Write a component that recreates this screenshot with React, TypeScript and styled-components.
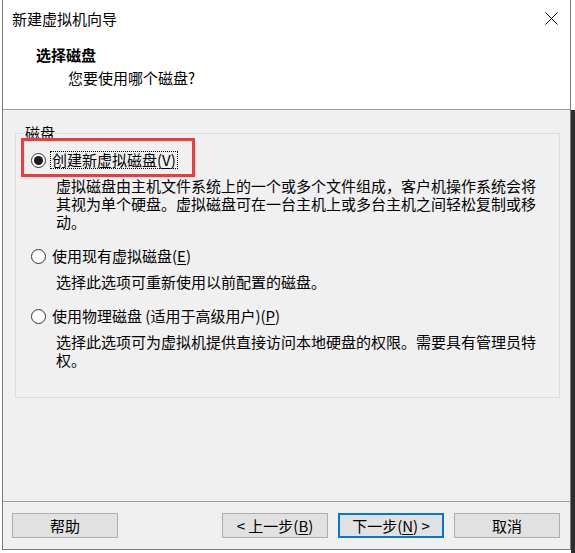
import React from "react";
import styled, { createGlobalStyle } from "styled-components";

const GlobalStyle = createGlobalStyle`
  html, body {
    margin: 0;
    padding: 0;
    background: #ffffff;
  }
  body {
    font-family: "Segoe UI", "Noto Sans CJK SC", "Noto Sans", sans-serif;
    font-size: 15px;
    color: #000000;
  }
  * {
    box-sizing: border-box;
  }
`;

const Desktop = styled.div`
  width: 575px;
  height: 553px;
  display: flex;
  overflow: hidden;
  background: #ffffff;
`;

const LeftEdge = styled.div`
  width: 2px;
  flex-shrink: 0;
  background: #ffffff;
`;

const RightEdge = styled.div`
  width: 4px;
  flex-shrink: 0;
  display: flex;
  flex-direction: column;
`;

const RightEdgeTop = styled.div`
  height: 110px;
  background: #ffffff;
`;

const RightEdgeBottom = styled.div`
  flex: 1;
  background: #2d2d2d;
`;

const Window = styled.div`
  width: 569px;
  height: 550px;
  flex-shrink: 0;
  display: flex;
  flex-direction: column;
  background: #f0f0f0;
  border-left: 1px solid #7a7a7a;
  border-right: 1px solid #7a7a7a;
  border-bottom: 1px solid #7a7a7a;
`;

const TitleBar = styled.div`
  height: 36px;
  display: flex;
  align-items: center;
  justify-content: space-between;
  padding-left: 9px;
  background: #ffffff;
`;

const TitleText = styled.span`
  line-height: 20px;
  padding-top: 1px;
`;

const CloseButton = styled.div`
  width: 38px;
  height: 36px;
  display: flex;
  align-items: center;
  justify-content: center;
`;

const Header = styled.div`
  height: 74px;
  display: flex;
  flex-direction: column;
  gap: 3px;
  padding: 9px 0 0 33px;
  background: #ffffff;
  border-bottom: 1px solid #a0a0a0;
`;

const HeaderTitle = styled.div`
  font-weight: bold;
  line-height: 20px;
`;

const HeaderSubtitle = styled.div`
  line-height: 20px;
  padding-left: 32px;
`;

const Body = styled.div`
  flex: 1;
  padding: 14px 10px 0 12px;
`;

const GroupBox = styled.fieldset`
  margin: 0;
  min-width: 0;
  padding: 9px 0 28px 15px;
  border: 1px solid #dcdcdc;
  display: flex;
  flex-direction: column;
`;

const GroupLegend = styled.legend`
  margin-left: -8px;
  padding: 0 2px;
  line-height: 18px;
`;

const Option = styled.div<{ $gap?: number }>`
  display: flex;
  flex-direction: column;
  margin-top: ${({ $gap }) => $gap ?? 0}px;
`;

const OptionRow = styled.div`
  position: relative;
  height: 18px;
  display: flex;
  align-items: center;
  gap: 4px;
`;

const Radio = styled.span<{ $checked?: boolean }>`
  width: 15px;
  height: 15px;
  border-radius: 50%;
  border: 1px solid #333333;
  background: #ffffff;
  display: flex;
  align-items: center;
  justify-content: center;

  &::after {
    content: "";
    width: 9px;
    height: 9px;
    border-radius: 50%;
    background: ${({ $checked }) => ($checked ? "#1b1b1b" : "transparent")};
  }
`;

const OptionLabel = styled.span<{ $focused?: boolean }>`
  line-height: 16px;
  padding: 0 1px;
  border: 1px dotted
    ${({ $focused }) => ($focused ? "#000000" : "transparent")};

  u {
    text-decoration-thickness: 1px;
    text-underline-offset: 2px;
  }
`;

const Highlight = styled.div`
  position: absolute;
  left: -10px;
  top: -13px;
  width: 174px;
  height: 39px;
  border: 3px solid #ef3b3b;
  pointer-events: none;
`;

const Description = styled.p`
  margin: 8px 0 0 25px;
  width: 488px;
  line-height: 18px;
`;

const Footer = styled.div`
  height: 48px;
  display: flex;
  justify-content: space-between;
  padding: 11px 10px 0 9px;
  border-top: 1px solid #a0a0a0;
`;

const ButtonGroup = styled.div`
  display: flex;
  gap: 10px;
`;

const Button = styled.button<{ $primary?: boolean }>`
  width: 106px;
  height: 25px;
  padding: 0;
  font: inherit;
  line-height: 20px;
  color: #000000;
  background: #e1e1e1;
  border: ${({ $primary }) =>
    $primary ? "2px solid #0078d7" : "1px solid #adadad"};

  u {
    text-decoration-thickness: 1px;
    text-underline-offset: 2px;
  }
`;

const options = [
  {
    label: "创建新虚拟磁盘",
    key: "V",
    description:
      "虚拟磁盘由主机文件系统上的一个或多个文件组成，客户机操作系统会将其视为单个硬盘。虚拟磁盘可在一台主机上或多台主机之间轻松复制或移动。",
    checked: true,
  },
  {
    label: "使用现有虚拟磁盘",
    key: "E",
    description: "选择此选项可重新使用以前配置的磁盘。",
    checked: false,
  },
  {
    label: "使用物理磁盘 (适用于高级用户)",
    key: "P",
    description:
      "选择此选项可为虚拟机提供直接访问本地硬盘的权限。需要具有管理员特权。",
    checked: false,
  },
];

function CloseIcon() {
  return (
    <svg width="13" height="13" viewBox="0 0 13 13">
      <path d="M0.5 0.5 L12.5 12.5 M12.5 0.5 L0.5 12.5" stroke="#000" strokeWidth="1" />
    </svg>
  );
}

export default function App() {
  return (
    <>
      <GlobalStyle />
      <Desktop>
        <LeftEdge />
        <Window>
          <TitleBar>
            <TitleText>新建虚拟机向导</TitleText>
            <CloseButton>
              <CloseIcon />
            </CloseButton>
          </TitleBar>
          <Header>
            <HeaderTitle>选择磁盘</HeaderTitle>
            <HeaderSubtitle>您要使用哪个磁盘?</HeaderSubtitle>
          </Header>
          <Body>
            <GroupBox>
              <GroupLegend>磁盘</GroupLegend>
              {options.map((opt, i) => (
                <Option key={opt.key} $gap={i === 0 ? 0 : 16}>
                  <OptionRow>
                    <Radio $checked={opt.checked} />
                    <OptionLabel $focused={opt.checked}>
                      {opt.label}(<u>{opt.key}</u>)
                    </OptionLabel>
                    {opt.checked && <Highlight />}
                  </OptionRow>
                  <Description>{opt.description}</Description>
                </Option>
              ))}
            </GroupBox>
          </Body>
          <Footer>
            <Button>帮助</Button>
            <ButtonGroup>
              <Button>
                &lt; 上一步(<u>B</u>)
              </Button>
              <Button $primary>
                下一步(<u>N</u>) &gt;
              </Button>
              <Button>取消</Button>
            </ButtonGroup>
          </Footer>
        </Window>
        <RightEdge>
          <RightEdgeTop />
          <RightEdgeBottom />
        </RightEdge>
      </Desktop>
    </>
  );
}
